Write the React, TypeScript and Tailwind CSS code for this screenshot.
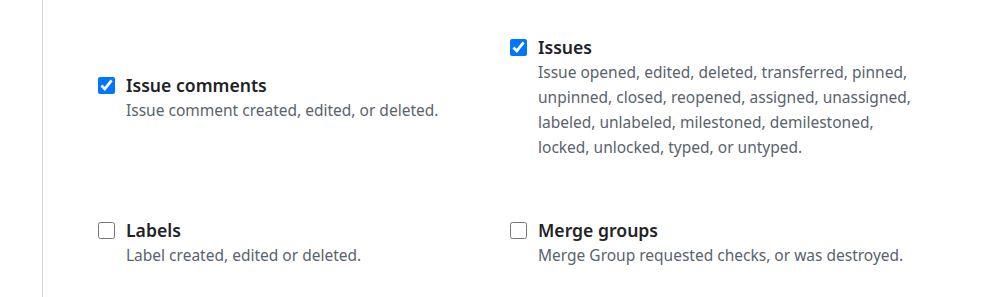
import React from 'react';

interface EventChoice {
  name: string;
  description: string;
  checked: boolean;
}

const events: EventChoice[] = [
  { name: 'Issue comments', description: 'Issue comment created, edited, or deleted.', checked: true },
  {
    name: 'Issues',
    description:
      'Issue opened, edited, deleted, transferred, pinned, unpinned, closed, reopened, assigned, unassigned, labeled, unlabeled, milestoned, demilestoned, locked, unlocked, typed, or untyped.',
    checked: true,
  },
  { name: 'Labels', description: 'Label created, edited or deleted.', checked: false },
  { name: 'Merge groups', description: 'Merge Group requested checks, or was destroyed.', checked: false },
];

const Choice: React.FC<{ event: EventChoice }> = ({ event }) => (
  <label className="flex items-start gap-[11px]">
    <input
      type="checkbox"
      defaultChecked={event.checked}
      className="mt-[4px] h-[17px] w-[17px] shrink-0 m-0"
    />
    <div className="min-w-0">
      <div className="text-[17.6px] font-semibold leading-[25px] text-[#1f2328]">{event.name}</div>
      <p className="max-w-[385px] text-[15.5px] leading-[25px] text-[#59636e]">{event.description}</p>
    </div>
  </label>
);

export default function App() {
  return (
    <div
      className="h-[297px] w-[982px] overflow-hidden bg-white"
      style={{ fontFamily: '"Noto Sans", "Liberation Sans", sans-serif' }}
    >
      <div className="ml-[42px] h-full border-l border-[#d1d9e0] pl-[55px] pt-[35px]">
        <div className="grid grid-cols-[412px_1fr] items-center gap-y-[58px]">
          {events.map((ev) => (
            <Choice key={ev.name} event={ev} />
          ))}
        </div>
      </div>
    </div>
  );
}
